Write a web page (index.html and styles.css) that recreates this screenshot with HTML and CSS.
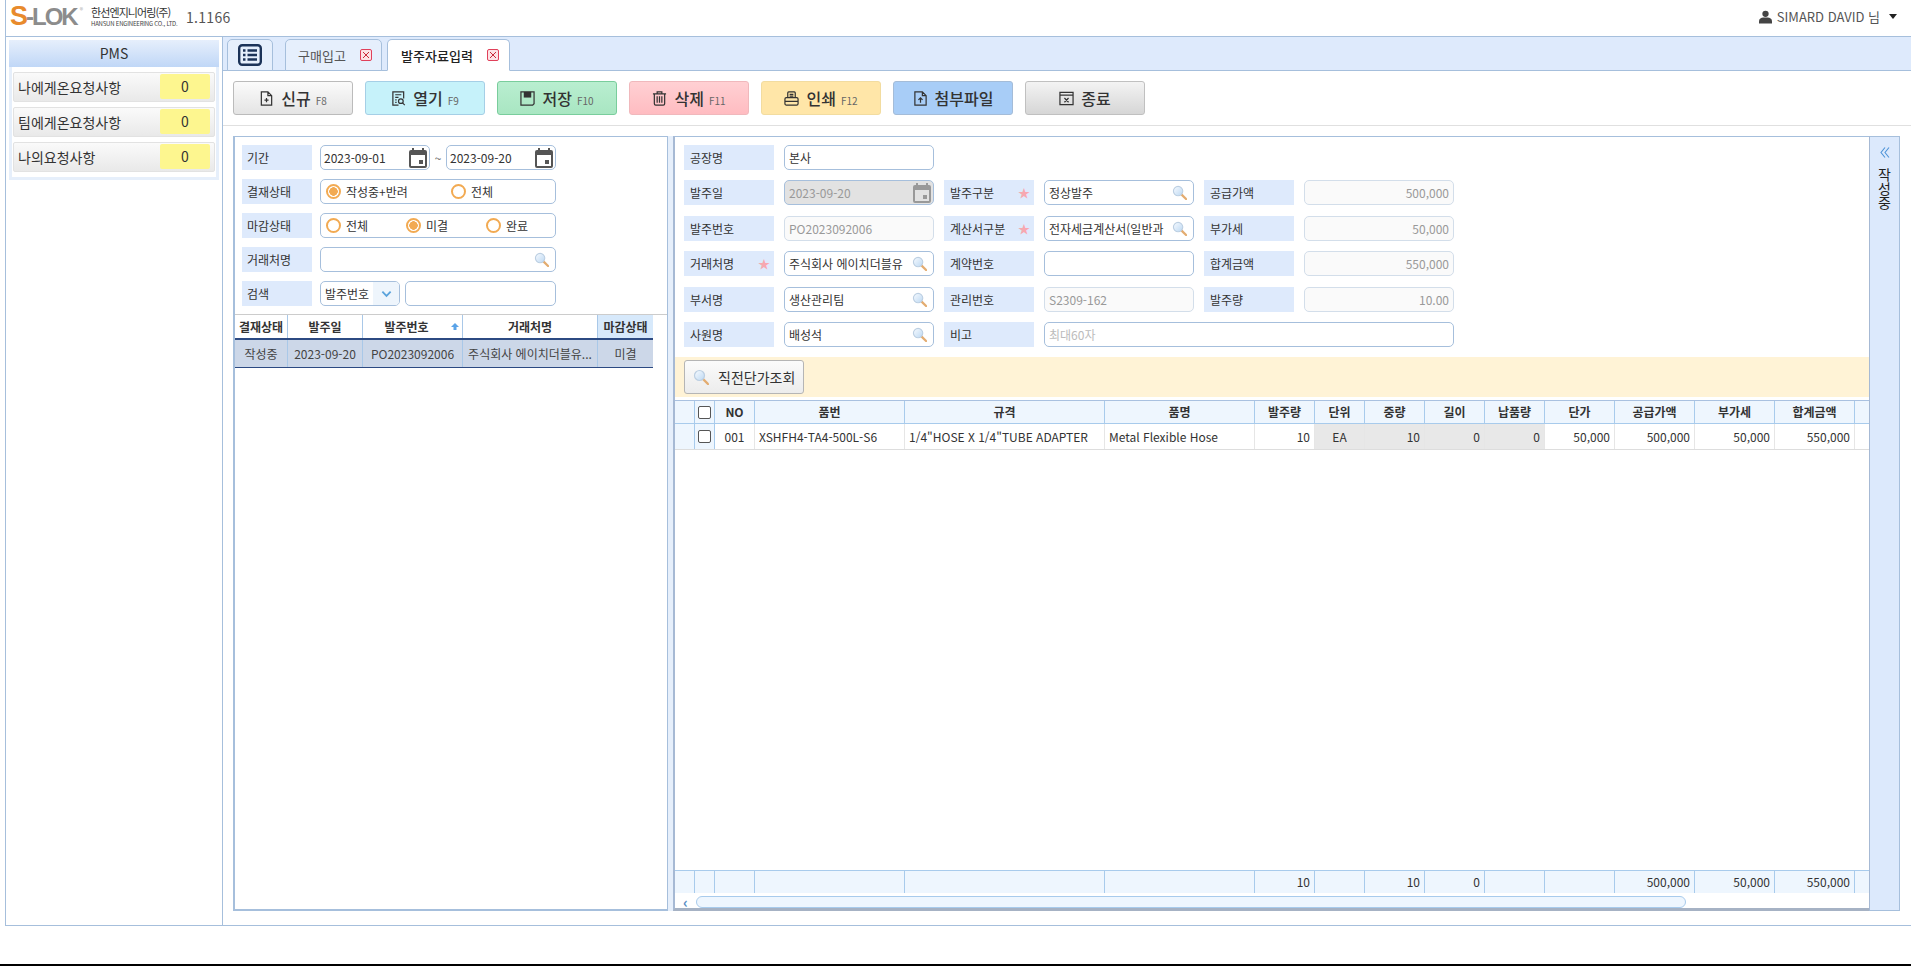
FILE: index.html
```html
<!DOCTYPE html>
<html lang="ko">
<head>
  <meta charset="UTF-8">
  <title>발주자료입력</title>
  <link rel="stylesheet" href="styles.css">
</head>
<body>
  <svg class="defs" width="0" height="0">
    <defs>
      <linearGradient id="glass" x1="0" y1="0" x2="1" y2="1">
        <stop offset="0" stop-color="#f8fbff"/>
        <stop offset="1" stop-color="#bcd8f2"/>
      </linearGradient>
      <symbol id="i-cal" viewBox="0 0 18 20">
        <path fill="currentColor" fill-rule="evenodd" d="M3 0h2v2h8V0h2v2h1a2 2 0 0 1 2 2v14a2 2 0 0 1-2 2H2a2 2 0 0 1-2-2V4a2 2 0 0 1 2-2h1zM2 7v11h14V7zM10 12h4v4h-4z"/>
      </symbol>
      <symbol id="i-find" viewBox="0 0 16 16">
        <path d="M10 10l5 5" stroke="#e3ac70" stroke-width="2.4" stroke-linecap="round"/>
        <circle cx="6.5" cy="6.5" r="5" fill="url(#glass)" stroke="#bccfe2" stroke-width="1.2"/>
      </symbol>
    </defs>
  </svg>

  <header class="top">
    <div class="logo">
      <span class="logo-mark"><b>S</b>-LOK</span>
      <sup class="logo-r">®</sup>
      <span class="logo-co">
        <span class="logo-ko">한선엔지니어링(주)</span>
        <span class="logo-en">HANSUN ENGINEERING CO., LTD.</span>
      </span>
    </div>
    <span class="version">1.1166</span>
    <div class="user">
      <svg class="user-icon" viewBox="0 0 14 14"><circle cx="7" cy="3.6" r="3.4"/><path d="M0 14v-2.4C0 9 2.5 7.6 4.5 7.6h5c2 0 4.5 1.4 4.5 4V14z"/></svg>
      <span>SIMARD DAVID 님</span>
      <i class="caret"></i>
    </div>
  </header>

  <main class="main">
    <aside class="side">
      <section class="pms">
        <h3 class="pms-title">PMS</h3>
        <div class="pms-row"><span>나에게온요청사항</span><b class="pms-count">0</b></div>
        <div class="pms-row"><span>팀에게온요청사항</span><b class="pms-count">0</b></div>
        <div class="pms-row"><span>나의요청사항</span><b class="pms-count">0</b></div>
      </section>
    </aside>

    <div class="content">
      <nav class="tabs">
        <div class="tab tab-menu">
          <svg class="menu-icon" viewBox="0 0 24 22"><rect x="1.2" y="1.2" width="21.6" height="19.6" rx="3" fill="none" stroke="#1c3358" stroke-width="2.4"/><path d="M5 6.5h2.500M5 11h2.500M5 15.5h2.500M9.500 6.5h9.500M9.500 11h9.500M9.500 15.5h9.500" stroke="#1c3358" stroke-width="2.4"/></svg>
        </div>
        <div class="tab tab-a">구매입고<i class="tab-x"></i></div>
        <div class="tab tab-b tab-on">발주자료입력<i class="tab-x"></i></div>
      </nav>

      <div class="toolbar">
        <button class="btn btn-new">
          <svg class="btn-icon" viewBox="0 0 16 16"><path d="M2.5 1h7l4 4v10h-11zM9.5 1v4h4M8 7.500v4.500M5.800 9.700h4.400"/></svg>
          신규<small>F8</small>
        </button>
        <button class="btn btn-open">
          <svg class="btn-icon" viewBox="0 0 16 16"><path d="M8 15H2V1h11.500v7M4.500 4h6.500M4.500 6.800h3.500M4.500 9.500h1.500M4.500 12.200h1.500"/><circle cx="10.500" cy="10.800" r="2.500"/><path d="M12.300 12.600l2.400 2.400"/></svg>
          열기<small>F9</small>
        </button>
        <button class="btn btn-save">
          <svg class="btn-icon" viewBox="0 0 16 16"><path d="M1 1h14v12.500L13.500 15H1z"/><path class="solid" d="M4 1h8v6H4z"/></svg>
          저장<small>F10</small>
        </button>
        <button class="btn btn-del">
          <svg class="btn-icon" viewBox="0 0 16 16"><path d="M1 3h14M5.500 3V1h5v2M2.500 3v10.500A1.500 1.500 0 0 0 4 15h8a1.500 1.500 0 0 0 1.500-1.500V3M5.500 5.500v7M8 5.500v7M10.500 5.500v7"/></svg>
          삭제<small>F11</small>
        </button>
        <button class="btn btn-print">
          <svg class="btn-icon" viewBox="0 0 16 16"><path d="M4 7V2a1 1 0 0 1 1-1h6a1 1 0 0 1 1 1v5M6 3.500h4M6 5.500h4M2.500 7h11A1.500 1.500 0 0 1 15 8.500v5a1.500 1.500 0 0 1-1.500 1.500h-11A1.500 1.500 0 0 1 1 13.500v-5A1.500 1.500 0 0 1 2.500 7zM1 11h14"/></svg>
          인쇄<small>F12</small>
        </button>
        <button class="btn btn-file">
          <svg class="btn-icon" viewBox="0 0 16 16"><path d="M2 1h8l4 4v10H2zM10 1v4h4M8 12.500V7.500M5.800 9.500L8 7.300l2.200 2.200"/></svg>
          첨부파일
        </button>
        <button class="btn btn-close">
          <svg class="btn-icon" viewBox="0 0 16 16"><path d="M1 1.500h14v13H1zM1 4.500h14M5.800 7.500l4.400 4.500M10.200 7.500l-4.400 4.500"/></svg>
          종료
        </button>
      </div>

      <div class="work">
        <section class="panel-left">
          <div class="filter">
            <div class="frow">
              <label class="lbl">기간</label>
              <div class="inp inp-date">2023-09-01<svg class="cal"><use href="#i-cal"/></svg></div>
              <span class="tilde">~</span>
              <div class="inp inp-date">2023-09-20<svg class="cal"><use href="#i-cal"/></svg></div>
            </div>
            <div class="frow">
              <label class="lbl">결재상태</label>
              <div class="inp radios radios-2">
                <span class="radio"><i class="dot on"></i>작성중+반려</span>
                <span class="radio"><i class="dot"></i>전체</span>
              </div>
            </div>
            <div class="frow">
              <label class="lbl">마감상태</label>
              <div class="inp radios radios-3">
                <span class="radio"><i class="dot"></i>전체</span>
                <span class="radio"><i class="dot on"></i>미결</span>
                <span class="radio"><i class="dot"></i>완료</span>
              </div>
            </div>
            <div class="frow">
              <label class="lbl">거래처명</label>
              <div class="inp inp-wide"><svg class="find"><use href="#i-find"/></svg></div>
            </div>
            <div class="frow">
              <label class="lbl">검색</label>
              <div class="inp inp-select">발주번호<span class="sel-btn"><svg viewBox="0 0 12 8"><path d="M1.500 1.500L6 6l4.500-4.500" fill="none" stroke="#5aa3dc" stroke-width="2"/></svg></span></div>
              <div class="inp inp-term"></div>
            </div>
          </div>

          <div class="list">
            <div class="list-row list-head">
              <div>결재상태</div>
              <div>발주일</div>
              <div class="sorted">발주번호<svg class="sort" viewBox="0 0 8 7"><path d="M4 0l4 4H5.500v3h-3V4H0z"/></svg></div>
              <div>거래처명</div>
              <div class="closed">마감상태</div>
            </div>
            <div class="list-row list-sel">
              <div>작성중</div>
              <div>2023-09-20</div>
              <div>PO2023092006</div>
              <div>주식회사 에이치더블유...</div>
              <div>미결</div>
            </div>
          </div>
        </section>

        <div class="split"></div>

        <section class="panel-right">
          <div class="form">
            <label class="lbl">공장명</label>
            <div class="inp">본사</div>
            <span class="blank"></span>
            <span class="blank"></span>
            <span class="blank"></span>
            <span class="blank"></span>

            <label class="lbl">발주일</label>
            <div class="inp inp-off">2023-09-20<svg class="cal"><use href="#i-cal"/></svg></div>
            <label class="lbl lbl-req">발주구분</label>
            <div class="inp">정상발주<svg class="find"><use href="#i-find"/></svg></div>
            <label class="lbl">공급가액</label>
            <div class="inp inp-ro num">500,000</div>

            <label class="lbl">발주번호</label>
            <div class="inp inp-ro">PO2023092006</div>
            <label class="lbl lbl-req">계산서구분</label>
            <div class="inp">전자세금계산서(일반과<svg class="find"><use href="#i-find"/></svg></div>
            <label class="lbl">부가세</label>
            <div class="inp inp-ro num">50,000</div>

            <label class="lbl lbl-req">거래처명</label>
            <div class="inp">주식회사 에이치더블유<svg class="find"><use href="#i-find"/></svg></div>
            <label class="lbl">계약번호</label>
            <div class="inp"></div>
            <label class="lbl">합계금액</label>
            <div class="inp inp-ro num">550,000</div>

            <label class="lbl">부서명</label>
            <div class="inp">생산관리팀<svg class="find"><use href="#i-find"/></svg></div>
            <label class="lbl">관리번호</label>
            <div class="inp inp-ro">S2309-162</div>
            <label class="lbl">발주량</label>
            <div class="inp inp-ro num">10.00</div>

            <label class="lbl">사원명</label>
            <div class="inp">배성석<svg class="find"><use href="#i-find"/></svg></div>
            <label class="lbl">비고</label>
            <div class="inp inp-note">최대60자</div>
          </div>

          <div class="bar">
            <button class="btn-price"><svg class="find-lg"><use href="#i-find"/></svg>직전단가조회</button>
          </div>

          <div class="sheet">
            <div class="sheet-row sheet-head">
              <div></div><div><i class="chk"></i></div><div>NO</div><div>품번</div><div>규격</div><div>품명</div><div>발주량</div><div>단위</div><div>중량</div><div>길이</div><div>납품량</div><div>단가</div><div>공급가액</div><div>부가세</div><div>합계금액</div><div class="end"></div>
            </div>
            <div class="sheet-row sheet-item">
              <div class="rowhead"></div>
              <div class="rowhead"><i class="chk"></i></div>
              <div class="c">001</div>
              <div>XSHFH4-TA4-500L-S6</div>
              <div>1/4"HOSE X 1/4"TUBE ADAPTER</div>
              <div>Metal Flexible Hose</div>
              <div class="r">10</div>
              <div class="c grey">EA</div>
              <div class="r grey">10</div>
              <div class="r grey">0</div>
              <div class="r grey">0</div>
              <div class="r">50,000</div>
              <div class="r">500,000</div>
              <div class="r">50,000</div>
              <div class="r">550,000</div>
              <div class="end"></div>
            </div>
            <div class="sheet-fill"></div>
            <div class="sheet-row sheet-foot">
              <div></div><div></div><div></div><div></div><div></div><div></div>
              <div>10</div><div></div><div>10</div><div>0</div><div></div><div></div>
              <div>500,000</div><div>50,000</div><div>550,000</div><div class="end"></div>
            </div>
            <div class="scroll">
              <span class="scroll-arrow">‹</span>
              <span class="scroll-thumb"></span>
            </div>
          </div>
        </section>

        <aside class="state">
          <svg class="state-arrow" viewBox="0 0 10 11"><path d="M5 .5L1 5.500l4 5M9 .5L5 5.500l4 5"/></svg>
          <span class="state-text">작성중</span>
        </aside>
      </div>
    </div>
  </main>

  <footer class="bottom"><i class="bottom-line"></i></footer>
</body>
</html>
```

FILE: styles.css
```css
* {
  box-sizing: border-box;
}
html, body {
  margin: 0;
  height: 966px;
  overflow: hidden;
}
body {
  font-family: "Noto Sans CJK KR", "Noto Sans", sans-serif;
  font-size: 12px;
  color: #333;
  background: #fff;
}
.defs {
  position: absolute;
}

/* top bar */
.top {
  height: 37px;
  display: flex;
  align-items: center;
  border-bottom: 1px solid #a6bfdc;
  border-left: 1px solid #a6bfdc;
  margin-left: 5px;
  padding: 0 14px 3px 0;
}
.logo {
  display: flex;
  align-items: center;
  width: 180px;
  flex: none;
  padding-left: 4px;
}
.logo-mark {
  font-family: "Liberation Sans", sans-serif;
  font-size: 24px;
  font-weight: bold;
  letter-spacing: -2px;
  color: #8c8c8c;
  line-height: 25px;
}
.logo-mark b {
  color: #e88a2c;
  font-size: 27px;
}
.logo-r {
  font-size: 7px;
  color: #aaa;
  margin: 3px 8px 0 3px;
  align-self: flex-start;
  line-height: 1;
}
.logo-co {
  display: flex;
  flex-direction: column;
  line-height: 1;
}
.logo-ko {
  font-size: 11px;
  color: #333;
  letter-spacing: -0.9px;
}
.logo-en {
  font-size: 6px;
  color: #444;
  margin-top: 3px;
  white-space: nowrap;
  letter-spacing: -0.2px;
}
.version {
  font-size: 14px;
  color: #555;
  letter-spacing: 0.3px;
}
.user {
  margin-left: auto;
  display: flex;
  align-items: center;
  font-size: 13px;
  color: #555;
}
.user-icon {
  width: 13px;
  height: 14px;
  fill: #444;
  margin-right: 5px;
}
.caret {
  width: 0;
  height: 0;
  border: 4px solid transparent;
  border-top: 5px solid #222;
  border-bottom: 0;
  margin-left: 9px;
}

/* frame */
.main {
  height: 889px;
  margin-left: 5px;
  display: flex;
  border-left: 1px solid #a6bfdc;
  border-bottom: 1px solid #a6bfdc;
}
.side {
  width: 217px;
  flex: none;
  border-right: 1px solid #a6bfdc;
  padding: 3px 0 0 3px;
}
.pms {
  width: 210px;
  height: 140px;
  border: 3px solid #e6effb;
  border-top: 0;
}
.pms-title {
  margin: 0 -3px 5px;
  height: 27px;
  font-size: 14px;
  font-weight: normal;
  line-height: 26px;
  text-align: center;
  background: linear-gradient(#e6effc, #c0d7f7);
}
.pms-row {
  height: 30px;
  margin: 0 1px 5px;
  display: flex;
  align-items: center;
  justify-content: space-between;
  padding: 0 4px 1px 4px;
  font-size: 14px;
  border: 1px solid #e2e2e2;
  border-radius: 2px;
  background: linear-gradient(#fafafa, #e9e9e9);
}
.pms-count {
  width: 50px;
  height: 25px;
  font-weight: normal;
  line-height: 24px;
  text-align: center;
  background: #fdf68f;
  border-radius: 2px;
}
.content {
  flex: 1;
  min-width: 0;
  display: flex;
  flex-direction: column;
}

/* tabs */
.tabs {
  height: 34px;
  flex: none;
  display: flex;
  align-items: flex-end;
  padding-left: 4px;
  background: #deeafc;
  border-bottom: 1px solid #a6bfdc;
}
.tab {
  height: 32px;
  margin-bottom: -1px;
  display: flex;
  align-items: center;
  justify-content: center;
  font-size: 13px;
  color: #555;
  background: #e6effc;
  border: 1px solid #a6bfdc;
  border-radius: 5px 5px 0 0;
}
.tab-menu {
  width: 46px;
  margin-right: 12px;
}
.menu-icon {
  width: 24px;
  height: 22px;
}
.tab-a {
  width: 97px;
  margin-right: 5px;
  padding-left: 3px;
}
.tab-b {
  width: 123px;
  padding-left: 3px;
}
.tab-on {
  background: #fff;
  color: #222;
  font-weight: 500;
  border-bottom-color: #fff;
}
.tab-x {
  width: 12px;
  height: 12px;
  margin-left: 14px;
  border: 1.5px solid #e0405a;
  border-radius: 2px;
  background:
    linear-gradient(45deg, transparent 43%, #c92a3a 43%, #c92a3a 57%, transparent 57%),
    linear-gradient(-45deg, transparent 43%, #c92a3a 43%, #c92a3a 57%, transparent 57%),
    #fde3e6;
  background-size: 6px 6px;
  background-position: center;
  background-repeat: no-repeat;
}

/* toolbar */
.toolbar {
  height: 55px;
  flex: none;
  display: flex;
  gap: 12px;
  padding: 10px 0 0 10px;
  border-bottom: 1px solid #e0e0e0;
}
.btn {
  width: 120px;
  height: 34px;
  display: flex;
  align-items: center;
  justify-content: center;
  padding: 0;
  font-family: inherit;
  font-size: 16px;
  font-weight: 500;
  color: #333;
  border: 1px solid #bbb;
  border-radius: 3px;
}
.btn small {
  font-size: 10px;
  font-weight: normal;
  color: #666;
  margin: 4px 0 0 5px;
}
.btn-icon {
  width: 15px;
  height: 17px;
  margin-right: 7px;
  fill: none;
  stroke: #333;
  stroke-width: 1.3;
}
.btn-icon .solid {
  fill: #333;
  stroke: none;
}
.btn-new {
  background: linear-gradient(#fbfbfb, #e4e4e4);
}
.btn-open {
  background: #c6f2fa;
  border-color: #a5cfe6;
}
.btn-save {
  background: linear-gradient(#b9eed0, #a9e6c2);
  border-color: #79cd9c;
}
.btn-del {
  background: linear-gradient(#ffd0d3, #ffbcc1);
  border-color: #f0b8bc;
}
.btn-print {
  background: #ffe6a8;
  border-color: #f2dca0;
}
.btn-file {
  background: #a8cdf7;
  border-color: #a4bcd8;
}
.btn-close {
  background: linear-gradient(#f3f3f3, #d6d6d6);
  border-color: #c0c0c0;
}

/* work area */
.work {
  flex: 1;
  min-height: 0;
  display: flex;
  padding: 10px 11px 14px 10px;
}
.panel-left {
  width: 435px;
  flex: none;
  padding-top: 8px;
  display: flex;
  flex-direction: column;
  border: 1px solid #a6bfdc;
  border-left-width: 2px;
  border-bottom-width: 2px;
}
.split {
  width: 5px;
  flex: none;
  background: #e6effb;
}
.panel-right {
  flex: 1;
  min-width: 0;
  display: flex;
  flex-direction: column;
  padding-top: 8px;
  border-top: 1px solid #a6bfdc;
  border-left: 2px solid #a6b9d4;
  border-bottom: 3px solid #a6b2c4;
}
.state {
  width: 31px;
  flex: none;
  display: flex;
  flex-direction: column;
  align-items: center;
  background: #dce9fc;
  border: 1px solid #a6bfdc;
  border-left-color: #a6b9d4;
}
.state-arrow {
  width: 10px;
  height: 11px;
  margin-top: 10px;
  fill: none;
  stroke: #4e93d8;
  stroke-width: 1.1;
}
.state-text {
  writing-mode: vertical-rl;
  font-size: 14px;
  color: #222;
  margin-top: 10px;
}

/* form bits */
.filter {
  display: flex;
  flex-direction: column;
  gap: 9px;
  padding-left: 7px;
}
.frow {
  display: flex;
  height: 25px;
}
.frow .lbl {
  width: 70px;
  margin-right: 8px;
  padding-left: 5px;
}
.lbl {
  height: 25px;
  line-height: 25px;
  padding-left: 6px;
  background: #deeafc;
  position: relative;
}
.lbl-req::after {
  content: "★";
  position: absolute;
  right: 4px;
  top: 0;
  font-size: 12px;
  color: #f7a8b0;
}
.inp {
  height: 25px;
  line-height: 23px;
  padding: 0 4px;
  border: 1px solid #a6bfdc;
  border-radius: 5px;
  background: #fff;
  display: flex;
  align-items: center;
  justify-content: space-between;
  color: #333;
  white-space: nowrap;
  overflow: hidden;
}
.inp-date {
  width: 110px;
  padding: 0 2px 0 3px;
}
.tilde {
  width: 16px;
  text-align: center;
  line-height: 25px;
  color: #666;
}
.cal {
  width: 18px;
  height: 20px;
  flex: none;
  color: #555;
}
.find {
  width: 15px;
  height: 15px;
  flex: none;
  margin-right: 2px;
}
.radios {
  width: 236px;
  justify-content: flex-start;
  padding-left: 5px;
}
.radio {
  display: flex;
  flex: none;
  align-items: center;
}
.radios-2 .radio {
  width: 125px;
}
.radios-3 .radio {
  width: 80px;
}
.dot {
  width: 15px;
  height: 15px;
  margin-right: 5px;
  border: 2px solid #f2aa52;
  border-radius: 50%;
  background: #fff;
}
.dot.on {
  background: radial-gradient(circle, #f2aa52 0 4px, #fff 4.5px);
}
.inp-wide {
  width: 236px;
  justify-content: flex-end;
}
.inp-select {
  width: 80px;
  padding: 0 0 0 4px;
}
.sel-btn {
  width: 26px;
  height: 100%;
  display: flex;
  align-items: center;
  justify-content: center;
  background: #eef5fc;
}
.sel-btn svg {
  width: 11px;
  height: 8px;
}
.inp-term {
  width: 151px;
  margin-left: 5px;
}
.form {
  display: grid;
  grid-template-columns: 90px 150px 90px 150px 90px 150px;
  grid-auto-rows: 25px;
  column-gap: 10px;
  row-gap: 10.4px;
  padding-left: 9px;
}
.inp-off {
  background: #e2e2e2;
  color: #999;
  padding-right: 2px;
}
.inp-off .cal {
  color: #999;
}
.inp-ro {
  background: #fafafa;
  color: #999;
  border-color: #d3deea;
}
.num {
  justify-content: flex-end;
}
.inp-note {
  grid-column: span 3;
  color: #bbb;
}

/* left list */
.list {
  margin-top: 8px;
  flex: 1;
  border-top: 1px solid #ccc;
}
.list-row {
  display: grid;
  grid-template-columns: 53px 75px 100px 135px 55px;
  width: 418px;
}
.list-row > div {
  display: flex;
  align-items: center;
  justify-content: center;
  border-right: 1px solid #a9c8e8;
  white-space: nowrap;
  overflow: hidden;
}
.list-head {
  height: 25px;
  font-weight: bold;
  border-bottom: 2px solid #2c4a82;
}
.list-head .closed {
  background: #d7e9fb;
  border-right: 0;
}
.sorted {
  position: relative;
  padding-right: 12px;
}
.sort {
  position: absolute;
  right: 3px;
  top: 8px;
  width: 8px;
  height: 7px;
  fill: #5aa3e8;
}
.list-sel {
  height: 28px;
  background: #ccd7e8;
  border-bottom: 1px solid #2c4a82;
  color: #444;
}
.list-sel > div:last-child {
  border-right: 0;
}

/* right sheet */
.bar {
  height: 40px;
  margin-top: 10px;
  flex: none;
  padding: 3px 0 0 9px;
  background: #fff3d6;
}
.btn-price {
  width: 120px;
  height: 34px;
  display: flex;
  align-items: center;
  padding: 0 0 0 8px;
  font-family: inherit;
  font-size: 14px;
  color: #333;
  border: 1px solid #b5b5b5;
  border-radius: 3px;
  background: linear-gradient(#fbfbfb, #ececec);
}
.find-lg {
  width: 16px;
  height: 16px;
  margin-right: 9px;
}
.sheet {
  flex: 1;
  min-height: 0;
  margin-top: 3px;
  display: flex;
  flex-direction: column;
}
.sheet-row {
  display: grid;
  grid-template-columns: 20px 20px 40px 150px 200px 150px 60px 50px 60px 60px 60px 70px 80px 80px 80px 14px;
  flex: none;
}
.sheet-row > div {
  display: flex;
  align-items: center;
  white-space: nowrap;
  overflow: hidden;
  border-right: 1px solid #a8cbec;
}
.sheet-row > .end {
  border-right: 0;
}
.sheet-head {
  height: 24px;
  font-weight: bold;
  background: #eef6fe;
  border-top: 1px solid #a9c1e0;
  border-bottom: 1px solid #a8cbec;
}
.sheet-head > div {
  justify-content: center;
}
.sheet-head .chk {
  margin-top: 1px;
}
.chk {
  width: 13px;
  height: 13px;
  border: 1px solid #555;
  border-radius: 2px;
  background: #fff;
}
.sheet-item {
  height: 26px;
  border-bottom: 1px solid #ddd;
}
.sheet-item > div {
  padding: 0 4px;
  border-right-color: #e6e6e6;
}
.sheet-item > .rowhead {
  justify-content: center;
  padding: 0;
  background: #eef6fe;
  border-right-color: #a8cbec;
}
.sheet-item > .c {
  justify-content: center;
}
.sheet-item > .r {
  justify-content: flex-end;
}
.sheet-item > .grey {
  background: #e8e8e8;
}
.sheet-fill {
  flex: 1;
}
.sheet-foot {
  height: 23px;
  background: #eef6fe;
  border-top: 1px solid #a8cbec;
}
.sheet-foot > div {
  justify-content: flex-end;
  padding: 0 4px 2px 0;
}
.scroll {
  height: 15px;
  flex: none;
  display: flex;
  align-items: center;
  padding-top: 2px;
}
.scroll-arrow {
  width: 21px;
  text-align: center;
  font-size: 15px;
  line-height: 12px;
  font-weight: bold;
  color: #5a8ec4;
}
.scroll-thumb {
  width: 990px;
  height: 12px;
  border: 1px solid #a8cbec;
  border-radius: 6px;
  background: #eef6fe;
}

/* page end */
.bottom {
  height: 40px;
  display: flex;
  align-items: flex-end;
}
.bottom-line {
  display: block;
  width: 100%;
  height: 2px;
  background: #000;
}
```
